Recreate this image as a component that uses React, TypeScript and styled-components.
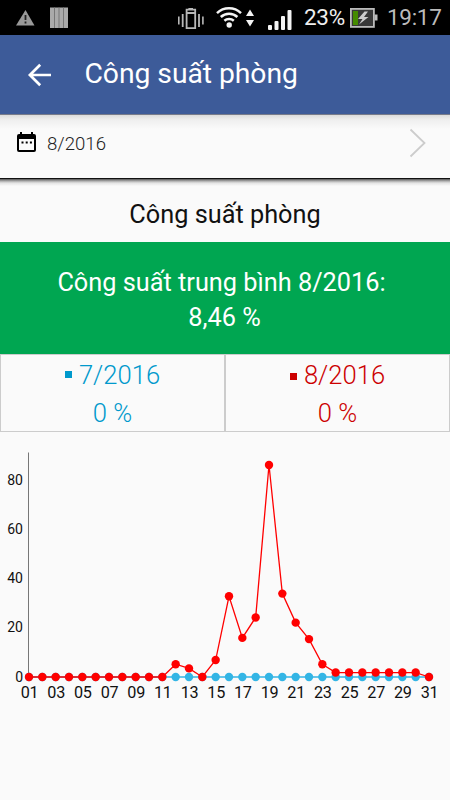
import React from 'react';
import styled, { createGlobalStyle } from 'styled-components';

const GlobalStyle = createGlobalStyle`
  * { box-sizing: border-box; }
  body { margin: 0; background: #fafafa; font-family: Roboto, sans-serif; }
`;

const Screen = styled.div`
  width: 450px;
  height: 800px;
  overflow: hidden;
  display: flex;
  flex-direction: column;
  background: #fafafa;
`;

const StatusBar = styled.div`
  height: 35px;
  flex: none;
  display: flex;
  align-items: center;
  background: #000;
  svg { display: block; flex: none; }
`;

const StatusText = styled.span<{ $color: string; $width: number; $gap: number }>`
  width: ${p => p.$width}px;
  margin-left: ${p => p.$gap}px;
  color: ${p => p.$color};
  font-size: 22.5px;
  letter-spacing: -0.3px;
  line-height: 35px;
  white-space: nowrap;
`;

const Toolbar = styled.header`
  height: 80px;
  flex: none;
  display: flex;
  align-items: center;
  padding: 0 0 1px 27px;
  background: #3d5b99;
  border-bottom: 1px solid #777b8a;
`;

const BackButton = styled.button`
  border: 0;
  padding: 0;
  width: 26px;
  height: 26px;
  margin-top: 1px;
  background: none;
  svg { display: block; }
`;

const Title = styled.h1`
  margin: 0 0 0 31.5px;
  color: #fff;
  font-size: 28.3px;
  font-weight: 400;
  line-height: 40px;
  letter-spacing: -0.05px;
`;

const MonthPicker = styled.div`
  height: 64px;
  flex: none;
  display: flex;
  align-items: center;
  padding: 0 24px 7px 17px;
  background: linear-gradient(#dcdcdc 0, #efefef 5px, #fafafa 14px);
  border-bottom: 1px solid #111;
`;

const Month = styled.span`
  flex: 1;
  margin: 1px 0 0 10px;
  color: #222;
  font-size: 18.6px;
  font-weight: 350;
  line-height: 24px;
`;

const Heading = styled.h2`
  height: 63px;
  flex: none;
  margin: 0;
  padding-top: 19px;
  background: linear-gradient(#555 0, #aaa 2px, #e3e3e3 4px, #fafafa 7px);
  color: #111;
  font-size: 25.3px;
  font-weight: 400;
  line-height: 34px;
  text-align: center;
`;

const Average = styled.section`
  height: 112px;
  flex: none;
  padding: 24px 7px 0 0;
  background: #00a651;
  color: #fff;
  font-size: 25.3px;
  line-height: 34.5px;
  text-align: center;
`;

const AverageValue = styled.div`
  padding-left: 6px;
`;

const Comparison = styled.div`
  display: grid;
  grid-template-columns: 1fr 1fr;
  grid-template-rows: 78px;
  height: 78px;
  flex: none;
`;

const Period = styled.div<{ $color: string }>`
  display: flex;
  flex-direction: column;
  align-items: center;
  padding-top: 2px;
  border: 1px solid #ccc;
  color: ${p => p.$color};
  font-size: 25.6px;
  font-weight: 350;
  line-height: 37.5px;
`;

const PeriodName = styled.div`
  display: flex;
  align-items: center;
  gap: 7px;
`;

const Marker = styled.i<{ $drop: number }>`
  width: 7px;
  height: 7px;
  margin-top: ${p => p.$drop}px;
  background: currentColor;
`;

const ChartSvg = styled.svg`
  display: block;
  flex: none;
  text { font-family: Roboto, sans-serif; fill: #111; }
`;

const YLabel = styled.text`
  font-size: 14px;
  text-anchor: end;
`;

const XLabel = styled.text`
  font-size: 16.2px;
  letter-spacing: -0.3px;
  text-anchor: middle;
`;

const current = [
  0, 0, 0, 0, 0, 0, 0, 0, 0, 0, 0, 5.2, 3.5, 0, 6.9, 32.8, 15.9, 24.2, 86.2, 33.9,
  22.1, 15.4, 5.2, 1.8, 1.8, 1.8, 1.8, 1.8, 1.8, 1.8, 0,
];
const previous = current.map(() => 0);

const xOf = (i: number) => 29 + (i * 400) / 30;
const yOf = (v: number) => 245 - v * 2.46;

function Series({ values, color }: { values: number[]; color: string }) {
  return (
    <g>
      <polyline
        points={values.map((v, i) => `${xOf(i)},${yOf(v)}`).join(' ')}
        fill="none"
        stroke={color}
        strokeWidth={1.3}
      />
      {values.map((v, i) => (
        <circle key={i} cx={xOf(i)} cy={yOf(v)} r={4.2} fill={color} />
      ))}
    </g>
  );
}

function OccupancyChart() {
  return (
    <ChartSvg width={450} height={290}>
      <path d="M28.5 20.5V245" stroke="#777" />
      {[80, 60, 40, 20, 0].map(v => (
        <YLabel key={v} x={23} y={yOf(v) + 4.5}>{v}</YLabel>
      ))}
      {current.map((_, i) =>
        i % 2 === 0 ? (
          <XLabel key={i} x={xOf(i) + 0.5} y={265.5}>{String(i + 1).padStart(2, '0')}</XLabel>
        ) : null,
      )}
      <Series values={previous} color="#33b5e5" />
      <Series values={current} color="#ff0000" />
    </ChartSvg>
  );
}

function StatusIcons() {
  return (
    <svg width={294} height={35}>
      <path d="M25.5 10 34.5 25.5H16Z" fill="#999" />
      <path d="M25.5 15v5M25.5 21.5v2" stroke="#222" strokeWidth={1.8} />
      <path d="M50 7.5h18V28H50Z" fill="#aaa" />
      <path d="M54.5 7.5V28M59 7.5V28M63.5 7.5V28" stroke="#777" />
      <g fill="none" stroke="#b8b8b8">
        <path d="M186.6 9.6h8.6v18.6h-8.6ZM186.6 13h8.6" strokeWidth={1.8} />
        <path d="M189 9v-.5h4" strokeWidth={1.2} />
        <path d="M182.7 14v13M199 14v13" strokeWidth={1.8} />
        <path d="M178.8 16.5v8M202.9 16.5v8" strokeWidth={1.6} />
      </g>
      <g fill="none" stroke="#f4f4f4" strokeWidth={2.5}>
        <path d="M217 13.2a17.3 17.3 0 0 1 24 0M220.8 17a12 12 0 0 1 16.6 0M224.4 20.8a7 7 0 0 1 9.4 0" />
      </g>
      <circle cx={229.2} cy={25} r={2.7} fill="#f4f4f4" />
      <path d="M250 9.5 254 16H246ZM250 26.5 246 20H254Z" fill="#f4f4f4" />
      <g fill="#f4f4f4">
        <rect x={268} y={25} width={4} height={5} rx={1} />
        <rect x={274.5} y={21} width={4} height={9} rx={1} />
        <rect x={281} y={16} width={4} height={14} rx={1} />
        <rect x={287.5} y={10} width={4} height={20} rx={1} />
      </g>
    </svg>
  );
}

function BatteryIcon() {
  return (
    <svg width={28} height={20} viewBox="0 0 28 20">
      <path d="M24.5 6.5h3v6h-3Z" fill="#bbb" />
      <rect x={0.9} y={0.9} width={23} height={18} fill="#383838" stroke="#bbb" strokeWidth={1.8} />
      <path d="M3 3h5v14H3Z" fill="#458b00" />
      <path d="M14.5 3.5 8 11h4.5L9 16.5 18.5 9H14l4-5.5Z" fill="#ccc" />
    </svg>
  );
}

export default function App() {
  return (
    <Screen>
      <GlobalStyle />
      <StatusBar>
        <StatusIcons />
        <StatusText $color="#eee" $width={46} $gap={10}>23%</StatusText>
        <BatteryIcon />
        <StatusText $color="#bbb" $width={56} $gap={9}>19:17</StatusText>
      </StatusBar>
      <Toolbar>
        <BackButton aria-label="Back">
          <svg width={26} height={26} fill="none" stroke="#fff" strokeWidth={2.7}>
            <path d="M24 13H3M13.2 2.7 2.9 13l10.3 10.3" />
          </svg>
        </BackButton>
        <Title>Công suất phòng</Title>
      </Toolbar>
      <MonthPicker>
        <svg width={20} height={22}>
          <path d="M2 2h15a2 2 0 0 1 2 2v14a2 2 0 0 1-2 2H2a2 2 0 0 1-2-2V4a2 2 0 0 1 2-2ZM2 7v11h15V7Z" fill="#000" fillRule="evenodd" />
          <path d="M4 0V4M15 0V4" stroke="#000" strokeWidth={2} />
          <path d="M4.5 10.5h2M8.7 10.5h2M12.9 10.5h2" stroke="#000" strokeWidth={2} />
        </svg>
        <Month>8/2016</Month>
        <svg width={17} height={30} fill="none" stroke="#ccc" strokeWidth={1.8}>
          <path d="M1.5 1.5 15.5 15l-14 13.5" />
        </svg>
      </MonthPicker>
      <Heading>Công suất phòng</Heading>
      <Average>
        <div>Công suất trung bình 8/2016:</div>
        <AverageValue>8,46 %</AverageValue>
      </Average>
      <Comparison>
        <Period $color="#0099cc">
          <PeriodName><Marker $drop={-3} />7/2016</PeriodName>
          <div>0 %</div>
        </Period>
        <Period $color="#cc0000">
          <PeriodName><Marker $drop={1} />8/2016</PeriodName>
          <div>0 %</div>
        </Period>
      </Comparison>
      <OccupancyChart />
    </Screen>
  );
}
